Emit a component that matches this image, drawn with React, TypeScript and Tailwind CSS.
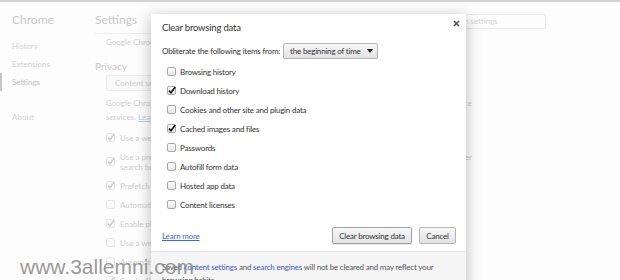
import React from "react";

const font = { fontFamily: 'Lato, "Open Sans", sans-serif' };

function Check({ color = "#111" }: { color?: string }) {
  return (
    <svg width="10" height="10" viewBox="0 0 10 10" className="absolute -left-px -top-[2px]">
      <path d="M2 5.6 L4 7.8 L8.2 2" fill="none" stroke={color} strokeWidth="1.6" />
    </svg>
  );
}

function Box({ checked, faded }: { checked?: boolean; faded?: boolean }) {
  return (
    <span
      className={
        "relative inline-block w-[9px] h-[9px] rounded-[2px] border shrink-0 " +
        (faded ? "border-[#e6e6e6] bg-[#fafafa]" : "border-[#a9a9a9] bg-gradient-to-b from-[#ffffff] to-[#e6e6e6]")
      }
    >
      {checked && <Check color={faded ? "#cdcdcd" : "#111"} />}
    </span>
  );
}

function BgRow({ checked, lines, tail }: { checked?: boolean; lines: string[]; tail?: string }) {
  const two = lines.length > 1;
  return (
    <div className={"flex items-center gap-[5px] " + (two ? "h-[29px]" : "h-[19px]")}>
      <Box checked={checked} faded />
      <div className="w-[352px] flex justify-between text-[8px] leading-[10px] text-[#cdcdcd] whitespace-nowrap">
        <div>
          {lines.map((l, i) => (
            <div key={i}>{l}</div>
          ))}
        </div>
        {tail && <div>{tail}</div>}
      </div>
    </div>
  );
}

const items: [string, boolean][] = [
  ["Browsing history", false],
  ["Download history", true],
  ["Cookies and other site and plugin data", false],
  ["Cached images and files", true],
  ["Passwords", false],
  ["Autofill form data", false],
  ["Hosted app data", false],
  ["Content licenses", false],
];

export default function App() {
  return (
    <div className="relative w-[620px] h-[280px] overflow-hidden bg-[#fdfdfd] border-t-2 border-[#d2d2d2]" style={font}>
      {/* background page (faded) */}
      <div className="flex">
        <div className="w-[95px] shrink-0">
          <div className="pl-[12px] pt-[10px] text-[12px] leading-[16px] text-[#c8c8c8]">Chrome</div>
          <div className="mt-[9px] text-[8px] leading-[18px] text-[#d2d2d2]">
            <div className="pl-[12px]">History</div>
            <div className="pl-[12px]">Extensions</div>
            <div className="pl-[10px] border-l-2 border-[#c6c6c6] text-[#c2c2c2]">Settings</div>
            <div className="pl-[12px] mt-[17px]">About</div>
          </div>
        </div>
        <div className="w-[451px] shrink-0">
          <div className="flex items-start justify-between">
            <div className="w-[300px] h-[32px] pt-[9px] border-b border-[#efefef] text-[12px] leading-[18px] text-[#c8c8c8]">Settings</div>
            <div className="mt-[12px] w-[110px] h-[15px] border border-[#ebebeb] rounded-[2px] text-[8px] leading-[13px] text-[#d2d2d2] pl-[8px]">Search settings</div>
          </div>
          <div className="pl-[11px] mt-[2px] text-[8px] leading-[12px] text-[#cdcdcd] whitespace-nowrap">Google Chrome may use web services to improve your browsing</div>
          <div className="mt-[11px] text-[10px] leading-[14px] text-[#c8c8c8]">Privacy</div>
          <div className="pl-[11px] mt-[2px]">
            <div className="w-[80px] h-[16px] border border-[#ececec] rounded-[2px] bg-[#f9f9f9] text-[8px] leading-[14px] text-[#cfcfcf] pl-[8px] whitespace-nowrap">Content settings...</div>
            <div className="mt-[5px] w-[366px] text-[8px] leading-[14px] text-[#cdcdcd] whitespace-nowrap">
              <div className="flex justify-between">
                <span>Google Chrome may use web services to improve your</span>
                <span>experience</span>
              </div>
              <div>services. <span className="text-[#bccaee] underline">Learn more</span></div>
            </div>
            <div className="mt-[4px]">
              <BgRow checked lines={["Use a web service to help resolve navigation errors"]} />
              <BgRow checked lines={["Use a prediction service to help complete searches", "search box"]} tail="launcher" />
              <BgRow checked lines={["Prefetch resources to load pages more quickly"]} />
              <BgRow lines={["Automatically send usage statistics"]} />
              <BgRow checked lines={["Enable phishing and malware protection"]} />
              <BgRow lines={["Use a web service to help resolve spelling errors"]} />
              <BgRow lines={["Automatically send"]} />
              <BgRow checked lines={["Send a \"Do Not Track\" request"]} />
            </div>
          </div>
        </div>
      </div>

      {/* dialog */}
      <div className="absolute left-[151px] top-[12px] w-[315px] h-[290px] bg-white shadow-[0_3px_14px_rgba(0,0,0,0.28)] flex flex-col tracking-[-0.2px]">
        <div className="relative pl-[11px] pt-[6px] text-[9.5px] leading-[16px] text-[#333]">
          Clear browsing data
          <svg width="7" height="7" viewBox="0 0 7 7" className="absolute right-[6px] top-[6px]">
            <path d="M1 1 L6 6 M6 1 L1 6" stroke="#555" strokeWidth="1.6" />
          </svg>
        </div>
        <div className="flex items-center pl-[11px] mt-[7px] h-[16px]">
          <span className="text-[8px] text-[#333] whitespace-nowrap">Obliterate the following items from:</span>
          <div className="ml-[3px] w-[95px] h-[16px] border border-[#b5b5b5] rounded-[2px] bg-gradient-to-b from-[#f8f8f8] to-[#e2e2e2] flex items-center justify-between pl-[6px] pr-[4px]">
            <span className="text-[8px] text-[#333] whitespace-nowrap">the beginning of time</span>
            <svg width="6" height="4" viewBox="0 0 6 4"><path d="M0 0 L6 0 L3 4 Z" fill="#222" /></svg>
          </div>
        </div>
        <div className="mt-[3px] pl-[16px]">
          {items.map(([label, c]) => (
            <div key={label} className="h-[19px] flex items-center gap-[4px]">
              <Box checked={c} />
              <span className="text-[8px] text-[#333] whitespace-nowrap">{label}</span>
            </div>
          ))}
        </div>
        <div className="mt-[13px] flex items-center pl-[11px] pr-[10px] h-[17px]">
          <span className="text-[8px] text-[#4465d6] underline">Learn more</span>
          <div className="ml-auto flex gap-[7px]">
            <div className="h-[17px] w-[80px] border border-[#a0a0a0] rounded-[2px] bg-gradient-to-b from-[#f8f8f8] to-[#e2e2e2] text-[8px] text-[#333] flex items-center justify-center shadow-[0_1px_1px_rgba(0,0,0,0.1)] whitespace-nowrap">Clear browsing data</div>
            <div className="h-[17px] w-[37px] border border-[#b5b5b5] rounded-[2px] bg-gradient-to-b from-[#f8f8f8] to-[#e2e2e2] text-[8px] text-[#333] flex items-center justify-center">Cancel</div>
          </div>
        </div>
        <div className="mt-[7px] flex-1 bg-[#f5f5f5] border-t border-[#e6e6e6] pl-[11px] pr-[20px] pt-[9px] text-[8px] leading-[13px] text-[#555]">
          Saved <span className="text-[#3f5bc6]">content settings</span> and <span className="text-[#3f5bc6]">search engines</span> will not be cleared and may reflect your browsing habits.
        </div>
      </div>

      {/* watermark */}
      <div className="absolute left-[20px] top-[252px] text-[21px] leading-[26px] text-[#7f7f7f]/80 whitespace-nowrap" style={{ fontFamily: '"Liberation Sans", Arial, sans-serif' }}>
        www.3allemni.com
      </div>
    </div>
  );
}
